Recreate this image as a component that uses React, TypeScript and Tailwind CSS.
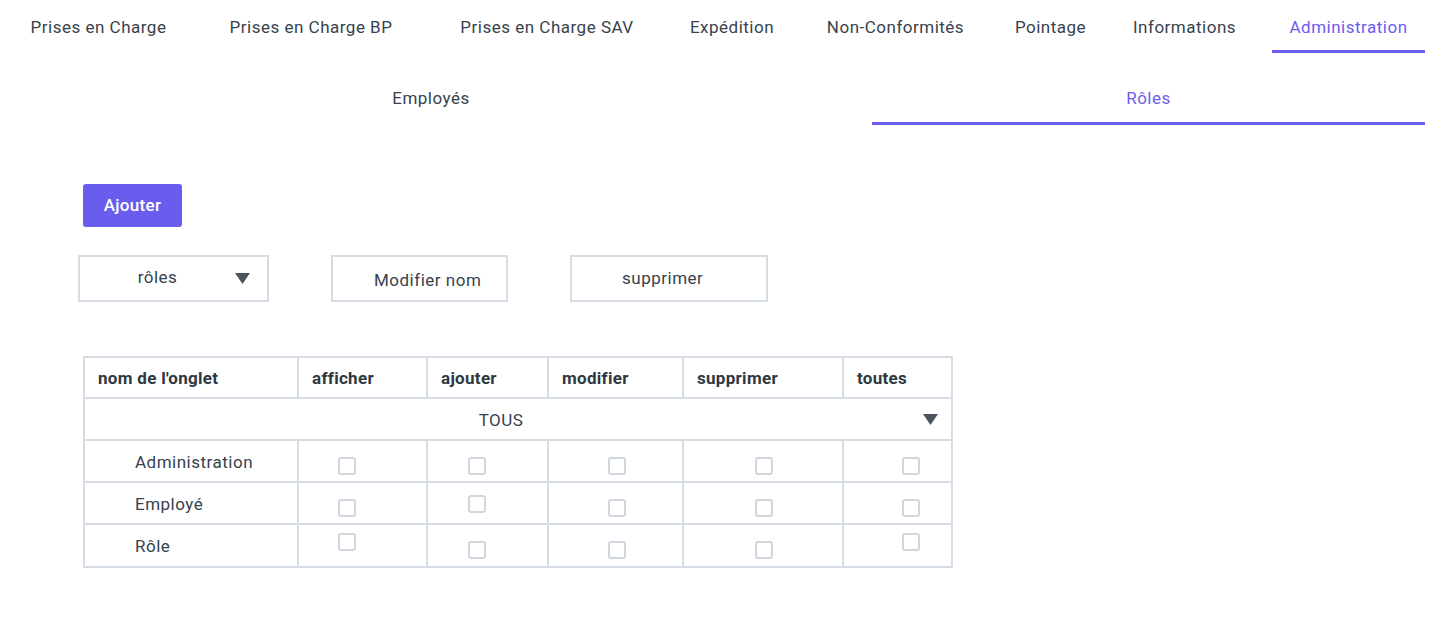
import { useState } from "react";

const tabs = [
  { label: "Prises en Charge", cls: "ml-[13px] w-[171px]" },
  { label: "Prises en Charge BP", cls: "ml-[27px] w-[200px]" },
  { label: "Prises en Charge SAV", cls: "ml-[31px] w-[210px]" },
  { label: "Expédition", cls: "ml-[21px] w-[118px]" },
  { label: "Non-Conformités", cls: "ml-[18px] w-[173px]" },
  { label: "Pointage", cls: "ml-[16px] w-[105px]" },
  { label: "Informations", cls: "ml-[13px] w-[137px]" },
  { label: "Administration", cls: "ml-[19px] w-[153px]" },
];

const columns = ["nom de l'onglet", "afficher", "ajouter", "modifier", "supprimer", "toutes"];

// checkbox offsets inside each permission cell
const boxPad = ["pl-[39px]", "pl-[40px]", "pl-[59px]", "pl-[71px]", "pl-[58px]"];

const rows = [
  { name: "Administration", tops: ["pt-[16px]", "pt-[16px]", "pt-[16px]", "pt-[16px]", "pt-[16px]"] },
  { name: "Employé", tops: ["pt-[16px]", "pt-[12px]", "pt-[16px]", "pt-[16px]", "pt-[16px]"] },
  { name: "Rôle", tops: ["pt-[8px]", "pt-[16px]", "pt-[16px]", "pt-[16px]", "pt-[8px]"] },
];

const grid = "grid grid-cols-[214px_129px_121px_135px_160px_107px]";

function Caret() {
  return (
    <svg width="15" height="11" viewBox="0 0 15 11" className="shrink-0">
      <path d="M0 0H15L7.5 11Z" fill="#4a5561" />
    </svg>
  );
}

function Checkbox({ checked, onToggle }: { checked: boolean; onToggle: () => void }) {
  return (
    <button
      onClick={onToggle}
      className={`block h-[18px] w-[18px] rounded-[3px] border-2 ${checked ? "border-[#6b5cf0] bg-[#6b5cf0]" : "border-[#cfd6dd] bg-white"}`}
    />
  );
}

export default function App() {
  const [checked, setChecked] = useState<Record<string, boolean>>({});

  return (
    <div className="min-h-screen bg-white font-['Roboto',sans-serif] text-[17px] tracking-[0.5px] text-[#37424d]">
      <nav className="flex h-[53px]">
        {tabs.map((t, i) => (
          <div
            key={t.label}
            className={`${t.cls} flex h-full items-center justify-center pt-[5px] ${
              i === tabs.length - 1 ? "border-b-[3px] border-[#6b5cf0] text-[#6b5cf0]" : "pb-[3px]"
            }`}
          >
            {t.label}
          </div>
        ))}
      </nav>

      <div className="flex h-[72px]">
        <div className="flex w-[862px] justify-center pt-[33px]">Employés</div>
        <div className="ml-[10px] flex w-[553px] justify-center border-b-[3px] border-[#6b5cf0] pt-[33px] text-[#6b5cf0]">
          Rôles
        </div>
      </div>

      <div className="pl-[78px] pt-[59px]">
        <button className="ml-[5px] flex h-[43px] w-[99px] items-center justify-center rounded-[3px] bg-[#6b5cf0] font-medium tracking-[0.3px] text-white">
          Ajouter
        </button>

        <div className="mt-[28px] flex h-[47px]">
          <div className="flex w-[191px] items-center border-2 border-[#d5dce3]">
            <span className="w-[155px] pb-[2px] text-center">rôles</span>
            <Caret />
          </div>
          <div className="ml-[62px] flex w-[177px] items-center border-2 border-[#d5dce3] pl-[41px] pt-[4px]">
            Modifier nom
          </div>
          <div className="ml-[62px] flex w-[198px] items-center border-2 border-[#d5dce3] pl-[50px]">
            supprimer
          </div>
        </div>

        <div className="ml-[5px] mt-[54px] w-[870px] border-2 border-[#d5dce3]">
          <div className={`${grid} h-[41px] border-b-2 border-[#d5dce3] font-bold text-[#2e3841]`}>
            {columns.map((c, i) => (
              <div
                key={c}
                className={`flex items-center pl-[13px] pt-[3px] tracking-[0.3px] ${i < 5 ? "border-r-2 border-[#d5dce3]" : ""}`}
              >
                {c}
              </div>
            ))}
          </div>

          <div className="flex h-[42px] items-center border-b-2 border-[#d5dce3] pr-[13px]">
            <span className="flex-1 pr-[6px] pt-[3px] text-center">TOUS</span>
            <Caret />
          </div>

          {rows.map((r, ri) => (
            <div
              key={r.name}
              className={`${grid} ${ri < rows.length - 1 ? "h-[42px] border-b-2 border-[#d5dce3]" : "h-[41px]"}`}
            >
              <div className="flex items-center border-r-2 border-[#d5dce3] pl-[50px] pt-[3px]">{r.name}</div>
              {r.tops.map((top, ci) => {
                const key = `${r.name}-${ci}`;
                return (
                  <div key={key} className={`${boxPad[ci]} ${top} ${ci < 4 ? "border-r-2 border-[#d5dce3]" : ""}`}>
                    <Checkbox
                      checked={!!checked[key]}
                      onToggle={() => setChecked((s) => ({ ...s, [key]: !s[key] }))}
                    />
                  </div>
                );
              })}
            </div>
          ))}
        </div>
      </div>
    </div>
  );
}
